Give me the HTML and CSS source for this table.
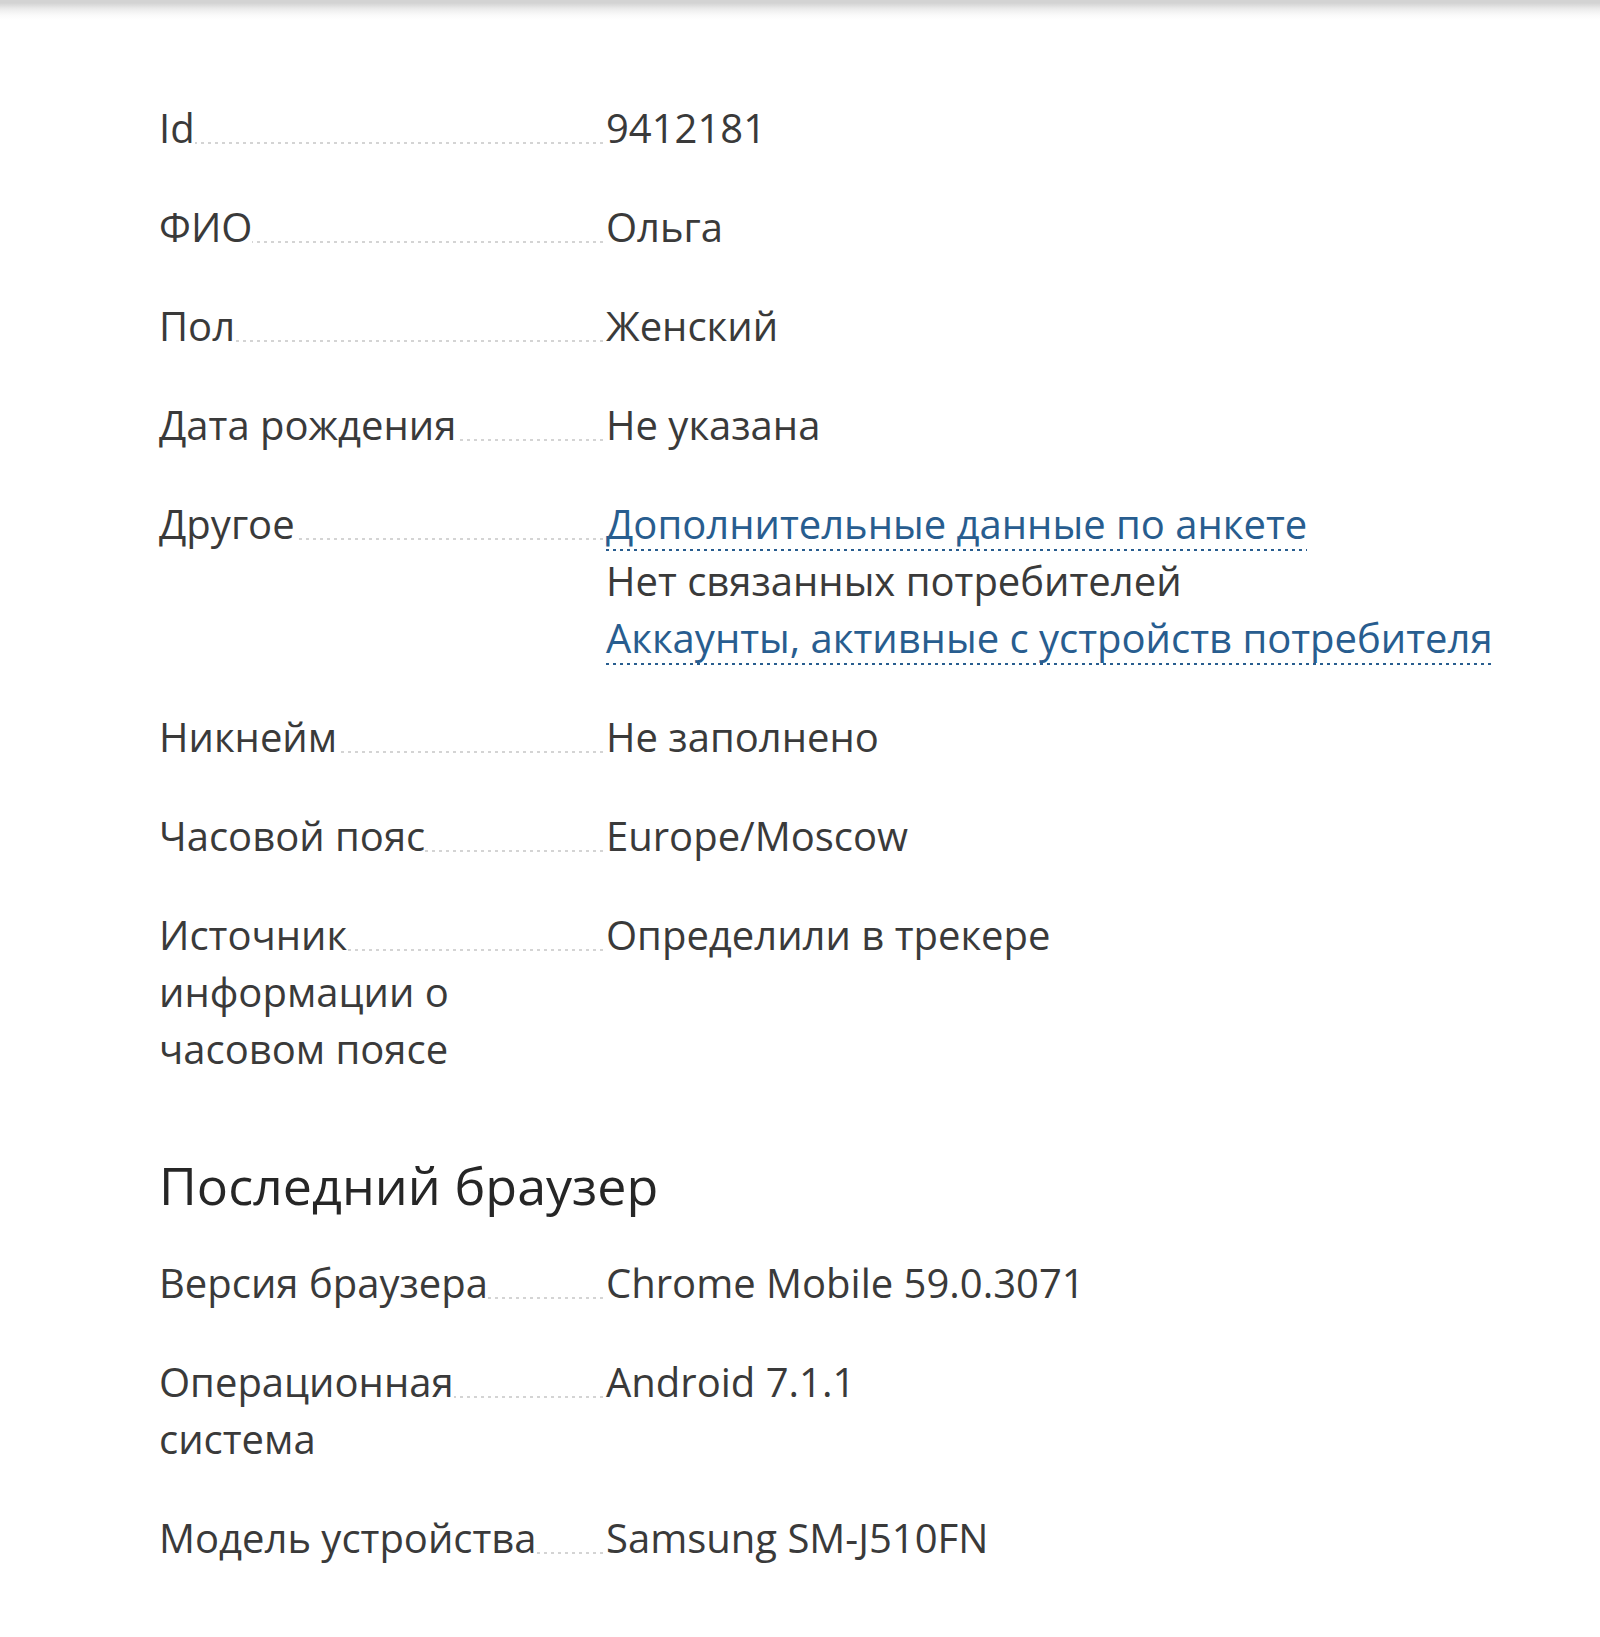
FILE: index.html
```html
<!DOCTYPE html>
<html lang="ru">
<head>
<meta charset="utf-8">
<title>Потребитель</title>
<link rel="stylesheet" href="styles.css">
</head>
<body>
<div class="topshade"></div>
<main class="content">
  <section class="props">
    <div class="row"><div class="label"><span>Id</span></div><div class="value">9412181</div></div>
    <div class="row"><div class="label"><span>ФИО</span></div><div class="value">Ольга</div></div>
    <div class="row"><div class="label"><span>Пол</span></div><div class="value">Женский</div></div>
    <div class="row"><div class="label"><span>Дата рождения</span></div><div class="value">Не указана</div></div>
    <div class="row"><div class="label"><span>Другое</span></div>
      <div class="value">
        <div><a class="dlink" href="#">Дополнительные данные по анкете</a></div>
        <div>Нет связанных потребителей</div>
        <div><a class="dlink" href="#">Аккаунты, активные с устройств потребителя</a></div>
      </div>
    </div>
    <div class="row"><div class="label"><span>Никнейм</span></div><div class="value">Не заполнено</div></div>
    <div class="row"><div class="label"><span>Часовой пояс</span></div><div class="value">Europe/Moscow</div></div>
    <div class="row"><div class="label"><span>Источник информации о часовом поясе</span></div><div class="value">Определили в трекере</div></div>
  </section>

  <h2 class="section-title">Последний браузер</h2>

  <section class="props">
    <div class="row"><div class="label"><span>Версия браузера</span></div><div class="value">Chrome Mobile 59.0.3071</div></div>
    <div class="row"><div class="label"><span>Операционная система</span></div><div class="value">Android 7.1.1</div></div>
    <div class="row"><div class="label"><span>Модель устройства</span></div><div class="value">Samsung SM-J510FN</div></div>
  </section>
</main>
</body>
</html>
```

FILE: styles.css
```css
html, body {
  margin: 0;
  padding: 0;
  background: #fff;
}

body {
  font-family: "Open Sans", "Liberation Sans", sans-serif;
  color: #3a3a3a;
  font-size: 40px;
}

.topshade {
  height: 20px;
  background: linear-gradient(to bottom, #d3d3d3 0, #d3d3d3 3px, #ececec 9px, #fafafa 15px, #fff 20px);
}

.content {
  padding: 79px 0 40px 159px;
}

.props {
  display: flex;
  flex-direction: column;
  gap: 42px;
}

.row {
  display: flex;
  line-height: 57px;
}

.label {
  position: relative;
  flex: none;
  width: 447px;
  padding-right: 40px;
  box-sizing: border-box;
}

.label::before {
  content: "";
  position: absolute;
  left: 0;
  right: 0;
  top: 43px;
  height: 2px;
  background-image: linear-gradient(to right, #d4d4d4 0 3px, transparent 3px);
  background-size: 7px 2px;
  background-repeat: repeat-x;
}

.label span {
  position: relative;
  background: #fff;
}

.value {
  flex: 1;
}

.dlink {
  color: #285d8f;
  text-decoration: none;
  background-image: linear-gradient(to right, #285d8f 0 3px, transparent 3px);
  background-size: 7px 2px;
  background-repeat: repeat-x;
  background-position: 0 100%;
}

.section-title {
  margin: 73px 0 34px 0;
  font-size: 52px;
  font-weight: 400;
  line-height: 70px;
  color: #262626;
}
```
